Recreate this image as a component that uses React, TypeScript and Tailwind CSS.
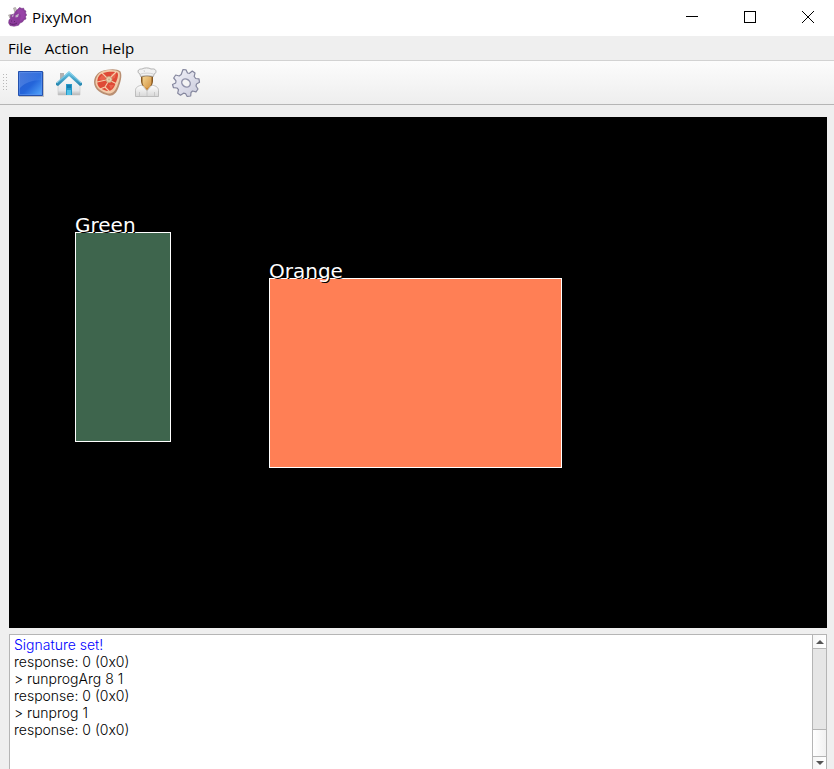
import React from 'react';

function DinoIcon() {
  return (
    <svg viewBox="0 0 20 20" className="h-5 w-5" aria-hidden="true">
      <path d="M7 6 5.500 1 7.500 .5 9.500 5ZM2 11 .5 8 3 7.500Z" fill="#c9c4c0" stroke="#8c8583" strokeWidth=".5" />
      <path d="M8 4 11.500 0.500 14 1.500 15.500 1 16.200 3 18 4 17.500 6 18.700 8 17.500 9.500 18 12 15.800 13 14.500 15 12 16 10.500 18.300 6 19.300 2 18.500.6 16 1 13 2.300 11.400 2.800 8 6 7Z" fill="#8c3c9c" stroke="#6d2f7c" strokeWidth=".5" />
      <path d="m10 3 2-1 2 1 2 1 1 4-1 3-2 2-2 1 1-6-4-3Z" fill="#9843a8" />
      <path d="m7.500 8.500 3.500-2-1 3.500-2.500.5ZM3.500 9l2.500-2-1 3.200Z" fill="#c3b3c8" />
      <path d="M2 16.500c2 1.500 5 1 7-.5M3 14h1M6 14.500h1" fill="none" stroke="#542061" strokeWidth=".8" />
    </svg>
  );
}

function StopIcon() {
  return (
    <svg viewBox="0 0 32 32" className="h-8 w-8" aria-hidden="true">
      <defs>
        <linearGradient id="stopFill" x1="0" y1="0" x2="1" y2="1">
          <stop offset="0" stopColor="#2a5bcb" />
          <stop offset=".55" stopColor="#2465da" />
          <stop offset="1" stopColor="#58acff" />
        </linearGradient>
        <linearGradient id="stopGloss" x1="0" y1="0" x2="1" y2="0">
          <stop offset="0" stopColor="#6f9cec" stopOpacity=".45" />
          <stop offset="1" stopColor="#5c91ef" stopOpacity=".25" />
        </linearGradient>
      </defs>
      <path d="M5 5h25v25H5z" fill="#777" opacity=".4" />
      <path d="M4.500 4.500h24v24h-24z" fill="url(#stopFill)" stroke="#2451ae" />
      <path d="M5.500 5.500h22v22h-22z" fill="none" stroke="#5b90ec" opacity=".65" />
      <path d="M5 5h23v8C18 13 10 16 5 22z" fill="url(#stopGloss)" />
    </svg>
  );
}

function HomeIcon() {
  return (
    <svg viewBox="0 0 32 32" className="h-8 w-8" aria-hidden="true">
      <defs>
        <linearGradient id="homeWall" x1="0" y1="0" x2="0" y2="1">
          <stop offset="0" stopColor="#fff" />
          <stop offset=".8" stopColor="#e4e6e9" />
          <stop offset="1" stopColor="#b4b4b4" />
        </linearGradient>
        <linearGradient id="homeRoof" x1="0" y1="0" x2="0" y2="1">
          <stop offset="0" stopColor="#73cbea" />
          <stop offset="1" stopColor="#2183ad" />
        </linearGradient>
      </defs>
      <path d="M7 6h4v8H7z" fill="#b2b2b2" />
      <path d="M5 16 16 6l11 10v12H5z" fill="url(#homeWall)" stroke="#c8c8c8" strokeWidth=".6" />
      <path d="M3 18v-2L16 4l13 12v2l-2 1L16 9 5 19z" fill="url(#homeRoof)" />
      <path d="M4 16 16 5l12 11" fill="none" stroke="#9adbf0" strokeWidth=".8" />
      <path d="M13 17h6v11h-6z" fill="#2599c8" />
      <path d="M14 18h4v3h-4z" fill="#167caf" />
      <path d="M14 23h4v5h-4z" fill="#53c2e8" />
    </svg>
  );
}

function SteakIcon() {
  return (
    <svg viewBox="0 0 32 32" className="h-8 w-8" aria-hidden="true">
      <path d="M10 4C16 2 25 1 28.500 4.500c2 4 0 11-2 16-2 6-6 9-10 8C10 27 2 23 2 15c.3-5 3-9 8-11Z" fill="#b98f72" />
      <path d="M10 4.500c6-2 14-2 17.300.7 1.700 3.300-.8 10.300-2.300 14.300-2 5-5 7.500-9 7C10 25 3.500 21 3.500 15 4 10 6 6.500 10 4.500Z" fill="#f2cbaa" />
      <path d="M11 6c5-1.500 11.500-1.800 14.500-.2 1.600 3-1 8-2.500 12.200-1.500 4-4.500 6.500-8 6C9 22.500 5 19.500 5.300 15 5.500 10.500 7 7.500 11 6Z" fill="#de4a36" />
      <path d="m7 12 3-4 4 3-3 2.500ZM19 7l5-1-1 5-3 1ZM17 18l5 0-3 4Z" fill="#e9644d" />
      <path d="m10 6 5 5M24 5l-6 6M5 15l9-2M16 15l-3 5-5 2M13 20l5 5M19 14l6 3" fill="none" stroke="#f4cdaa" strokeWidth="1.100" />
      <circle cx="17" cy="12.500" r="3" fill="#ead0ac" stroke="#c99a78" strokeWidth=".8" />
      <circle cx="17" cy="12.500" r="1" fill="#c9b291" />
    </svg>
  );
}

function ChefIcon() {
  return (
    <svg viewBox="0 0 32 32" className="h-8 w-8" aria-hidden="true">
      <defs>
        <linearGradient id="chefCoat" x1="0" y1="0" x2="0" y2="1">
          <stop offset="0" stopColor="#fff" />
          <stop offset="1" stopColor="#d8d8d8" />
        </linearGradient>
        <linearGradient id="chefFace" x1="0" y1="0" x2="1" y2="1">
          <stop offset="0" stopColor="#f5d795" />
          <stop offset="1" stopColor="#d3913f" />
        </linearGradient>
      </defs>
      <path d="M4.500 29.500v-6c0-3.500 3-4.500 6.500-5.500h10c3.500 1 6.500 2 6.500 5.500v6Z" fill="url(#chefCoat)" stroke="#aaa" strokeWidth=".7" />
      <path d="M11.500 18h9l-4.500 5.500Z" fill="#c88534" />
      <path d="m11 18 5 6 5-6M16 24v5M8.500 25v4m15-4v4" fill="none" stroke="#c2c2c2" strokeWidth=".8" />
      <path d="M10 8h12v6c0 2-1 4-2 5h-8c-1-1-2-3-2-5Z" fill="#85561f" />
      <path d="M11.500 10c2-1 7-1 9 0v5c0 3-2 6-4.500 6S11.500 18 11.500 15Z" fill="url(#chefFace)" />
      <path d="M9.500 9.500 9 7C7 6.500 6.500 4 7.500 3S10 2 11 2c2-1.500 7-1.500 9 0 1.500 0 4-.5 4.700 1.300C25.500 5 24.500 7 23 7l-.5 2.500c-4-1-9-1-13 0Z" fill="#f1f1f1" stroke="#a2a2a2" strokeWidth=".8" />
      <path d="M9.500 7c4-1.200 9-1.200 13 0M13 3l.5 2" fill="none" stroke="#c4c4c4" strokeWidth=".7" />
    </svg>
  );
}

function GearIcon() {
  return (
    <svg viewBox="0 0 32 32" className="h-8 w-8" aria-hidden="true">
      <defs>
        <linearGradient id="gearFill" x1="0" y1="0" x2="1" y2="1">
          <stop offset="0" stopColor="#f3f3fa" />
          <stop offset="1" stopColor="#c9cadb" />
        </linearGradient>
      </defs>
      <path d="m13 2.500 3 .3 1.500 3.200 2 .3 2.800-2.300 2.700 2-.8 3.500 1.500 2 3.300.3.500 3.500-3 1.700-.5 2 2 3-2 2.800-3.500-.8-1.500 1.500-.3 3.500-3.500.5-1.700-3-2-.3-3 2-2.800-2 .8-3.500-1.500-1.700-3.500-.3L2.500 17.500l3.200-1.500.3-2.200L3.700 11l2-3 3.500 1 2-1.500Z" fill="url(#gearFill)" stroke="#85879e" strokeWidth="1.200" strokeLinejoin="round" />
      <ellipse cx="16" cy="16" rx="4.500" ry="3.700" transform="rotate(35 16 16)" fill="#f4f4f4" stroke="#9092aa" strokeWidth="1.500" />
    </svg>
  );
}

const tools = [
  { label: 'Run or stop', Icon: StopIcon },
  { label: 'Default program', Icon: HomeIcon },
  { label: 'Raw video', Icon: SteakIcon },
  { label: 'Cooked video', Icon: ChefIcon },
  { label: 'Configure', Icon: GearIcon },
];

const log = [
  'response: 0 (0x0)',
  '> runprogArg 8 1',
  'response: 0 (0x0)',
  '> runprog 1',
  'response: 0 (0x0)',
];

function WindowButtons() {
  return (
    <div className="flex h-full gap-3 pr-[3px]">
      <button aria-label="Minimize" className="flex h-full w-[46px] items-center justify-center">
        <svg viewBox="0 0 12 12" className="h-3 w-3" shapeRendering="crispEdges"><path d="M0 5h12v1H0z" /></svg>
      </button>
      <button aria-label="Maximize" className="flex h-full w-[46px] items-center justify-center">
        <span className="h-3 w-3 border border-black" />
      </button>
      <button aria-label="Close" className="flex h-full w-[46px] items-center justify-center">
        <svg viewBox="0 0 12 12" className="h-3 w-3"><path d="m0 0 12 12M12 0 0 12" stroke="#000" fill="none" /></svg>
      </button>
    </div>
  );
}

export default function App() {
  return (
    <div className="flex h-screen flex-col overflow-hidden bg-[#efefef] font-['Open_Sans','Noto_Sans',sans-serif] text-black">
      <header className="flex h-9 shrink-0 items-center justify-between bg-white pb-0.5">
        <div className="flex items-center gap-1 pl-2">
          <DinoIcon />
          <h1 className="text-[15px] leading-5">PixyMon</h1>
        </div>
        <WindowButtons />
      </header>

      <nav aria-label="Main menu" className="flex h-[25px] shrink-0 items-center gap-[13px] border-b border-[#d2d2d2] px-2 text-[15px] leading-5">
        <button>File</button>
        <button>Action</button>
        <button>Help</button>
      </nav>

      <div role="toolbar" aria-label="Tools" className="flex h-11 shrink-0 items-center border-b border-[#b5b5b5] bg-linear-to-b from-[#fcfcfc] to-[#eeeeee] pl-[3px]">
        <svg viewBox="0 0 5 17" className="mr-1.5 h-[17px] w-[5px]" shapeRendering="crispEdges" aria-hidden="true">
          <path d="M0 0h1v1H0zM3 0h1v1H3zM0 3h1v1H0zM3 3h1v1H3zM0 6h1v1H0zM3 6h1v1H3zM0 9h1v1H0zM3 9h1v1H3zM0 12h1v1H0zM3 12h1v1H3zM0 15h1v1H0zM3 15h1v1H3z" fill="#b8b8b8" />
        </svg>
        <div className="flex gap-[7px]">
          {tools.map(({ label, Icon }) => (
            <button key={label} aria-label={label}><Icon /></button>
          ))}
        </div>
      </div>

      <main className="flex min-h-0 flex-1 flex-col gap-1.5 pt-3 pr-[7px] pl-[9px]">
        <section aria-label="Camera view" className="relative aspect-[8/5] w-full shrink-0 bg-black font-['DejaVu_Sans',sans-serif] text-xl leading-6 text-white">
          <div className="absolute top-[115px] left-[66px] h-[210px] w-24 border border-white bg-[#3e654d]">
            <span className="absolute -top-5 -left-px [text-shadow:1px_1px_0_#000]">Green</span>
          </div>
          <div className="absolute top-[161px] left-[260px] h-[190px] w-[293px] border border-white bg-[#ff7f55]">
            <span className="absolute -top-5 -left-px [text-shadow:1px_1px_0_#000]">Orange</span>
          </div>
        </section>

        <section aria-label="Console" className="flex min-h-0 flex-1 border-x border-t border-[#b5b5b5] bg-white">
          <div className="min-w-0 flex-1 overflow-hidden px-1 pt-px font-['Inter',sans-serif] text-sm leading-[17px] font-light">
            <p className="text-[#0000ff]">Signature set!</p>
            {log.map((line, i) => <p key={i}>{line}</p>)}
          </div>
          <div className="flex w-[14px] shrink-0 flex-col border-l border-[#b5b5b5] bg-[#e6e6e6]">
            <button aria-label="Scroll up" className="flex h-[14px] items-center justify-center border-b border-[#b5b5b5] bg-linear-to-r from-[#f6f6f6] to-white">
              <svg viewBox="0 0 8 4" className="h-1 w-2"><path d="M0 4 4 0l4 4z" fill="#555" /></svg>
            </button>
            <div className="flex-1" />
            <div className="h-7 border-y border-[#b5b5b5] bg-linear-to-r from-white to-[#f1f1f1]" />
            <button aria-label="Scroll down" className="flex h-3 items-center justify-center bg-linear-to-r from-[#f6f6f6] to-white">
              <svg viewBox="0 0 8 4" className="h-1 w-2"><path d="m0 0 4 4 4-4z" fill="#555" /></svg>
            </button>
          </div>
        </section>
      </main>
    </div>
  );
}
